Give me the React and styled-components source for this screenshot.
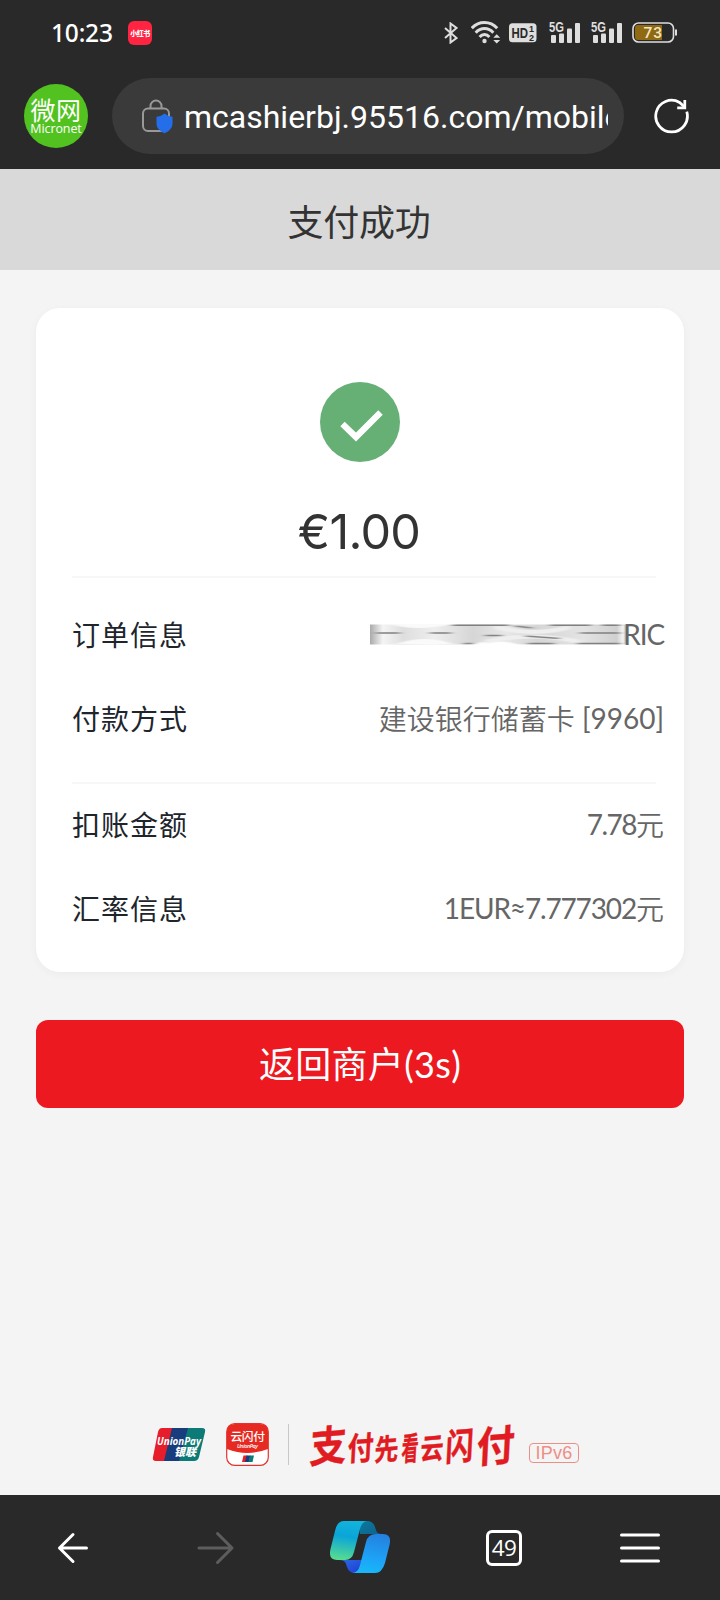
import React from "react";
import styled, { createGlobalStyle } from "styled-components";

const GlobalStyle = createGlobalStyle`
  * { box-sizing: border-box; }
  body { margin: 0; background: #f4f4f4; }
`;

const cjk = `"Noto Sans CJK SC", sans-serif`;

const Screen = styled.div`
  width: 720px;
  height: 1600px;
  display: flex;
  flex-direction: column;
  background: #f4f4f4;
  font-family: ${cjk};
  overflow: hidden;
`;

const StatusBar = styled.div`
  height: 63px;
  flex: none;
  display: flex;
  align-items: center;
  justify-content: space-between;
  padding: 2px 42px 0 51px;
  background: #292929;
`;

const StatusGroup = styled.div`
  display: flex;
  align-items: center;
`;

const Clock = styled.span`
  width: 77px;
  color: #fff;
  font: 500 24.5px/30px "Noto Sans", sans-serif;
  letter-spacing: -0.2px;
  white-space: nowrap;
`;

const AppBadge = styled.div`
  width: 24px;
  height: 24px;
  border-radius: 6px;
  background: #ff2442;
  color: #fff;
  display: flex;
  align-items: center;
  justify-content: center;
  font: 900 7px/12px ${cjk};
  letter-spacing: -0.5px;
  white-space: nowrap;
`;

const AddressRow = styled.div`
  height: 106px;
  flex: none;
  display: flex;
  align-items: center;
  padding: 0 30px 0 24px;
  background: #292929;
`;

const SiteLogo = styled.div`
  width: 64px;
  height: 64px;
  flex: none;
  border-radius: 50%;
  background: #51c220;
  color: #fff;
  display: flex;
  flex-direction: column;
  align-items: center;
  padding-top: 12px;
`;

const SiteName = styled.span`
  font: 400 25px/26px ${cjk};
  letter-spacing: 0.5px;
`;

const SiteLatin = styled.span`
  font: 400 12.5px/14px "Open Sans", sans-serif;
  letter-spacing: -0.1px;
`;

const AddressPill = styled.div`
  width: 512px;
  height: 76px;
  margin: 0 30px 0 24px;
  padding: 0 16px 0 29px;
  border-radius: 38px;
  background: #3a3a3a;
  display: flex;
  align-items: center;
`;

const Url = styled.div`
  width: 424px;
  margin-left: 11px;
  padding-top: 1px;
  overflow: hidden;
  white-space: nowrap;
  color: #fff;
  font: 400 32px/42px Roboto, sans-serif;
`;

const TitleBar = styled.h1`
  height: 101px;
  flex: none;
  margin: 0;
  display: flex;
  align-items: center;
  justify-content: center;
  padding: 0 2px 0 0;
  background: #d9d9d9;
  color: #333;
  font: 400 36px/50px ${cjk};
  letter-spacing: -0.3px;
`;

const Page = styled.main`
  flex: 1;
  display: flex;
  flex-direction: column;
  padding: 38px 36px 0;
`;

const Card = styled.section`
  height: 664px;
  flex: none;
  border-radius: 24px;
  background: #fff;
  box-shadow: 0 2px 8px rgba(0, 0, 0, 0.04);
  padding: 74px 20px 0 36px;
  display: flex;
  flex-direction: column;
`;

const Result = styled.div`
  display: flex;
  flex-direction: column;
  align-items: center;
  height: 196px;
  margin: 0 8px 14px 0;
  padding-right: 8px;
  border-bottom: 2px solid #f7f7f7;
`;

const Amount = styled.div`
  margin: 40px 2px 0 0;
  color: #333;
  font: 400 48.5px/60px Inter, sans-serif;
  letter-spacing: -0.7px;
`;

const Row = styled.div`
  height: 84px;
  display: flex;
  align-items: center;
  justify-content: space-between;
`;

const Label = styled.span`
  color: #20252c;
  font: 400 28px/40px ${cjk};
  letter-spacing: 1px;
`;

const Value = styled.span`
  display: flex;
  align-items: center;
  color: #666;
  font: 400 28px/40px Lato, "Noto Sans CJK SC", sans-serif;
  letter-spacing: ${(p) => p.$tracking || 0}px;
  white-space: pre;
`;

const Han = styled.span`
  font-family: ${cjk};
  font-weight: 350;
  letter-spacing: 0;
`;

const Divider = styled.hr`
  width: 584px;
  height: 2px;
  margin: 22px 0 -2px;
  border: 0;
  background: #f7f7f7;
`;

const ReturnButton = styled.button`
  height: 88px;
  flex: none;
  margin-top: 48px;
  border: 0;
  border-radius: 12px;
  background: #ec1920;
  color: #fff;
  font: 400 36px/50px Lato, "Noto Sans CJK SC", sans-serif;
  letter-spacing: 0.3px;
  padding: 0;
`;

const Brands = styled.footer`
  margin-top: auto;
  padding: 0 0 28px 116px;
  height: 73px;
  display: flex;
  align-items: center;
`;

const Separator = styled.i`
  width: 1px;
  height: 41px;
  margin: 0 20px 0 19px;
  background: #c8c8c8;
`;

const IpTag = styled.span`
  width: 50px;
  height: 20px;
  margin: 17px 0 0 13px;
  border: 1px solid #ec8f87;
  border-radius: 4px;
  color: #ec8f87;
  font: 400 18px/18px "Liberation Sans", sans-serif;
  letter-spacing: 0.2px;
  text-align: center;
`;

const NavBar = styled.nav`
  height: 105px;
  flex: none;
  display: grid;
  grid-template-columns: repeat(5, 1fr);
  align-items: center;
  justify-items: center;
  background: #292929;
`;

const TabCount = styled.span`
  width: 36px;
  height: 36px;
  border: 3px solid #fff;
  border-radius: 6px;
  color: #fff;
  font: 400 22.5px/29px "Open Sans", sans-serif;
  letter-spacing: -0.6px;
  text-align: center;
`;

const Shift = styled.span`
  display: flex;
  margin-left: ${(p) => p.$left || 0}px;
  margin-right: ${(p) => p.$right || 0}px;
`;

const Bluetooth = () => (
  <svg width="14" height="22" viewBox="0 0 14 22" fill="none" stroke="#dedede" strokeWidth="2">
    <path d="M1 6l11.5 10L6.5 20.5V1.5l6 4.5L1 16" />
  </svg>
);

const Wifi = () => (
  <svg width="30" height="23" viewBox="0 0 30 23" fill="none" stroke="#dedede" strokeWidth="3">
    <path d="M.8 7.200C7.800-.4 19.200-.4 26.200 7.200M4.700 11.700C9.700 6.200 17.300 6.200 22.300 11.700M8.600 16C11.500 12.800 15.500 12.800 18.400 16" />
    <circle cx="13.500" cy="20" r="2.200" fill="#dedede" stroke="none" />
    <path d="M22.300 16.700l3.400-3.500L29.200 16.700zM22.300 19L29.200 19l-3.500 3.500z" fill="#dedede" stroke="none" />
  </svg>
);

const HdBadge = () => (
  <svg width="28" height="20" viewBox="0 0 28 20" fontFamily="Liberation Sans, sans-serif" fontWeight="700" fill="#292929">
    <rect y=".3" width="27.500" height="19" rx="3.500" fill="#dedede" />
    <text x="2.500" y="15.200" fontSize="15.500" textLength="16.500" lengthAdjust="spacingAndGlyphs">HD</text>
    <text x="20" y="9.300" fontSize="9">1</text>
    <text x="20" y="17.800" fontSize="9">2</text>
  </svg>
);

const Signal = () => (
  <svg width="32" height="23" viewBox="0 0 32 23" fill="#dedede" overflow="visible">
    <text x="0" y="11" fontSize="14.500" fontFamily="Liberation Sans, sans-serif" fontWeight="700" textLength="15" lengthAdjust="spacingAndGlyphs">5G</text>
    <rect x="2" y="14" width="5" height="8" rx="1" />
    <rect x="10" y="12.500" width="5" height="9.500" rx="1" />
    <rect x="18" y="7.500" width="5" height="14.500" rx="1" />
    <rect x="26" y="2" width="5" height="20" rx="1" />
  </svg>
);

const Battery = () => (
  <svg width="46" height="21" viewBox="0 0 46 21">
    <rect x="1" y="1" width="40.500" height="19" rx="5.500" fill="none" stroke="#dedede" strokeWidth="1.600" />
    <path d="M6 3H30V18H6Q3 18 3 15V6Q3 3 6 3Z" fill="#8f6a12" />
    <path d="M44 7.500v6" stroke="#dedede" strokeWidth="2" />
    <text x="11.500" y="16" fontSize="15.500" fontFamily="Roboto, sans-serif" fontWeight="500" fill="#f4e7c2" textLength="18.500">73</text>
  </svg>
);

const SecureBag = () => (
  <svg width="32" height="36" viewBox="0 0 32 36">
    <g fill="none" stroke="#999" strokeWidth="2">
      <rect x="2" y="10.500" width="26" height="22.500" rx="5" />
      <path d="M9.500 10.500V8a5.500 5.500 0 0 1 11 0v2.500" />
    </g>
    <path d="M23.500 15.500q3.500 3 8 3.200v6.800c0 5-4 8-8 9.800-4-1.800-8-4.800-8-9.800v-6.800q4.500-.2 8-3.200z" fill="#246ee9" />
  </svg>
);

const Refresh = () => (
  <svg width="38" height="38" viewBox="0 0 38 38" fill="none" stroke="#fff" strokeWidth="2.900">
    <path d="M34.600 14.500A16.700 16.700 0 1 1 27 4.700L32 9.300" />
    <path d="M32.500 2v8.300H24.500" />
  </svg>
);

const Success = () => (
  <svg width="80" height="80" viewBox="0 0 80 80">
    <circle cx="40" cy="40" r="40" fill="#66b075" />
    <path d="M22.500 42L36 55 60.500 30.500" fill="none" stroke="#fff" strokeWidth="6.300" />
  </svg>
);

/* Smudged-out part of the order number */
const Redaction = () => (
  <svg width="257" height="22" viewBox="0 0 257 22">
    <defs>
      <linearGradient id="smudge">
        <stop offset="0" stopColor="#aaa" />
        <stop offset=".05" stopColor="#f4f4f4" />
        <stop offset=".13" stopColor="#dedede" />
        <stop offset=".25" stopColor="#eee" />
        <stop offset=".4" stopColor="#d6d6d6" />
        <stop offset=".53" stopColor="#e7e7e7" />
        <stop offset=".65" stopColor="#d6d6d6" />
        <stop offset=".83" stopColor="#e3e3e3" />
        <stop offset=".96" stopColor="#d0d0d0" />
        <stop offset=".985" stopColor="#f4f4f4" />
        <stop offset="1" stopColor="#999" />
      </linearGradient>
      <filter id="soft" x="-5%" y="-50%" width="110%" height="200%">
        <feGaussianBlur stdDeviation="3 .6" />
      </filter>
    </defs>
    <rect y="1.500" width="257" height="20" fill="url(#smudge)" />
    <g filter="url(#soft)" fill="none">
      <path d="M20 1Q45 9 83 1ZM26 21Q55 11 83 21Z" fill="#fafafa" />
      <path d="M100 22Q125 14 150 22Z" fill="#fff" />
      <path d="M115 19Q160 8 210 19M125 4Q165 14 200 4" stroke="#efefef" strokeWidth="4" />
      <path d="M6 10H30M60 10H81M115 12.500H132M155 13L190 15.500M210 10H250" stroke="#808080" strokeWidth="1.500" />
      <path d="M82 2.200H139M145 3L162 5M180 2.200H221M232 2.200H250M94 20.500H104M158 20.500H184M207 20.500H250" stroke="#808080" strokeWidth="1.500" />
    </g>
  </svg>
);

const UnionPayLogo = () => (
  <svg width="55" height="36" viewBox="0 0 55 36">
    <path d="M10 1H24L16 34H4Q0 34 1 30L6 5Q7 1 10 1Z" fill="#e61d2b" />
    <path d="M20 1H38L30 34H12Z" fill="#183c7c" />
    <path d="M36 1H50Q54 1 53 5L47 30Q46 34 42 34H27Z" fill="#0c7b77" />
    <g fill="#fff" fontWeight="700" fontStyle="italic">
      <text x="5" y="17.500" fontFamily="Open Sans, sans-serif" fontSize="10" textLength="44" lengthAdjust="spacingAndGlyphs">UnionPay</text>
      <text x="22" y="28.500" fontFamily="Noto Sans CJK SC, sans-serif" fontWeight="900" fontSize="11" textLength="22">银联</text>
    </g>
  </svg>
);

const QuickPassLogo = () => (
  <svg width="43" height="43" viewBox="0 0 43 43">
    <rect x=".7" y=".7" width="41.600" height="41.600" rx="8" fill="#fff" stroke="#e5322e" strokeWidth="1.200" />
    <path d="M1 26V9q0-8 8-8h25q8 0 8 8v17Q21.500 34 1 26z" fill="#e62a22" />
    <text x="4.500" y="17.500" fontSize="11.800" fontFamily="Noto Sans CJK SC, sans-serif" fontWeight="500" fill="#fff" textLength="34.500">云闪付</text>
    <text x="11" y="25" fontSize="5.500" fontFamily="Open Sans, sans-serif" fontStyle="italic" fontWeight="600" fill="#fff" textLength="21">UnionPay</text>
    <path d="M17.500 32.500h4L20 39h-4z" fill="#e61d2b" />
    <path d="M20.500 32.500h4L23 39h-4z" fill="#183c7c" />
    <path d="M24 32.500h4L26.500 39h-4z" fill="#0c7b77" />
  </svg>
);

const sloganGlyphs = [
  ["支", 0, 46, 42, 37],
  ["付", 38, 44, 32, 26],
  ["先", 65, 44, 29, 24],
  ["看", 92, 44, 32, 17],
  ["云", 111, 43, 29, 23],
  ["闪", 136, 44, 37, 28],
  ["付", 167, 46, 42, 38],
];

const Slogan = () => (
  <svg width="207" height="56" viewBox="0 0 207 56" overflow="visible" fontFamily="Noto Sans CJK SC, sans-serif" fontWeight="700" fill="#e11b22" stroke="#e11b22" strokeWidth=".4">
    {sloganGlyphs.map(([glyph, x, y, size, width]) => (
      <g key={x} transform={`translate(${x} ${y}) skewY(-5) skewX(-3)`}>
        <text fontSize={size} textLength={width} lengthAdjust="spacingAndGlyphs">{glyph}</text>
      </g>
    ))}
  </svg>
);

const Back = () => (
  <svg width="32" height="32" viewBox="0 0 32 32" fill="none" stroke="#fff" strokeWidth="3" strokeLinecap="round" strokeLinejoin="round">
    <path d="M29.500 16H2.500M16 2.500L2.500 16 16 29.500" />
  </svg>
);

const Forward = () => (
  <svg width="38" height="34" viewBox="0 0 38 34" fill="none" stroke="#5d5d5d" strokeWidth="3" strokeLinecap="round" strokeLinejoin="round">
    <path d="M2 17H35M20.500 2.500L35 17 20.500 31.500" />
  </svg>
);

const Copilot = () => (
  <svg width="61" height="53" viewBox="0 0 61 53">
    <defs>
      <linearGradient id="cpA" x1=".5" x2=".35" y2="1">
        <stop stopColor="#12b3dc" /><stop offset=".4" stopColor="#0aa5d8" /><stop offset="1" stopColor="#58dc91" />
      </linearGradient>
      <linearGradient id="cpB" x1=".6" x2=".4" y2="1">
        <stop stopColor="#2481df" /><stop offset=".6" stopColor="#1da2f6" /><stop offset="1" stopColor="#18b8f8" />
      </linearGradient>
      <linearGradient id="cpC" x2="1" y2="1">
        <stop stopColor="#087aa0" /><stop offset="1" stopColor="#11608b" />
      </linearGradient>
      <linearGradient id="cpD" x2="1" y2="1">
        <stop stopColor="#2b6be4" /><stop offset="1" stopColor="#203bd5" />
      </linearGradient>
    </defs>
    <path d="M29 0H37Q43 0 45 6L46 9Q47 13 52 13H30Z" fill="url(#cpC)" />
    <path d="M9 39H32L27 52H25Q19 52 17 46L16 43Q15 39 9 39Z" fill="url(#cpD)" />
    <path d="M14 0H38Q32 0 30 8L24 31Q22 39 15 39H7Q-2 39 .5 28L5 10Q7 0 14 0Z" fill="url(#cpA)" />
    <path d="M46 13H53Q62 13 59.500 24L55 42Q52 52 45 52H22Q28 52 30 44L36 21Q38 13 46 13Z" fill="url(#cpB)" />
  </svg>
);

const Menu = () => (
  <svg width="40" height="30" viewBox="0 0 40 30" stroke="#fff" strokeWidth="3" strokeLinecap="round">
    <path d="M1.500 2H38.500M1.500 15H38.500M1.500 28H38.500" />
  </svg>
);

export default function App() {
  return (
    <>
      <GlobalStyle />
      <Screen>
        <StatusBar>
          <StatusGroup>
            <Clock>10:23</Clock>
            <AppBadge>小红书</AppBadge>
          </StatusGroup>
          <StatusGroup>
            <Bluetooth />
            <Shift $left={13}><Wifi /></Shift>
            <Shift $left={8}><HdBadge /></Shift>
            <Shift $left={12}><Signal /></Shift>
            <Shift $left={10}><Signal /></Shift>
            <Shift $left={9}><Battery /></Shift>
          </StatusGroup>
        </StatusBar>
        <AddressRow>
          <SiteLogo>
            <SiteName>微网</SiteName>
            <SiteLatin>Micronet</SiteLatin>
          </SiteLogo>
          <AddressPill>
            <SecureBag />
            <Url>mcashierbj.95516.com/mobile</Url>
          </AddressPill>
          <Refresh />
        </AddressRow>
        <TitleBar>支付成功</TitleBar>
        <Page>
          <Card>
            <Result>
              <Success />
              <Amount>€1.00</Amount>
            </Result>
            <Row>
              <Label>订单信息</Label>
              <Value $tracking={-1.1}>
                <Shift $right={-4}><Redaction /></Shift>RIC
              </Value>
            </Row>
            <Row>
              <Label>付款方式</Label>
              <Value><Han>建设银行储蓄卡</Han> [9960]</Value>
            </Row>
            <Divider />
            <Row>
              <Label>扣账金额</Label>
              <Value $tracking={-1.5}>7.78<Han>元</Han></Value>
            </Row>
            <Row>
              <Label>汇率信息</Label>
              <Value $tracking={-1.15}>1EUR≈7.777302<Han>元</Han></Value>
            </Row>
          </Card>
          <ReturnButton>返回商户(3s)</ReturnButton>
          <Brands>
            <UnionPayLogo />
            <Shift $left={19}><QuickPassLogo /></Shift>
            <Separator />
            <Slogan />
            <IpTag>IPv6</IpTag>
          </Brands>
        </Page>
        <NavBar>
          <Shift $left={1}><Back /></Shift>
          <Forward />
          <Copilot />
          <TabCount>49</TabCount>
          <Shift $right={16}><Menu /></Shift>
        </NavBar>
      </Screen>
    </>
  );
}
